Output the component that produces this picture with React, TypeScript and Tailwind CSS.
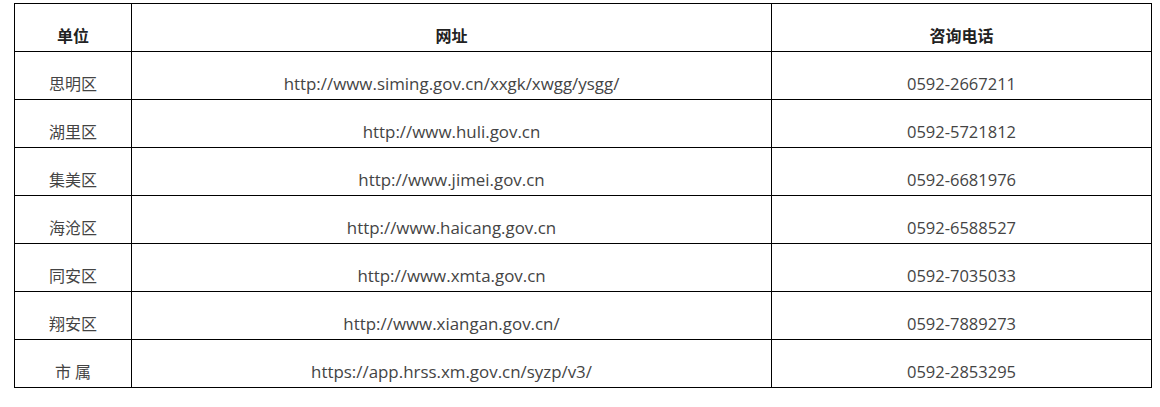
import React from "react";

const rows = [
  { unit: "思明区", url: "http://www.siming.gov.cn/xxgk/xwgg/ysgg/", tel: "0592-2667211" },
  { unit: "湖里区", url: "http://www.huli.gov.cn", tel: "0592-5721812" },
  { unit: "集美区", url: "http://www.jimei.gov.cn", tel: "0592-6681976" },
  { unit: "海沧区", url: "http://www.haicang.gov.cn", tel: "0592-6588527" },
  { unit: "同安区", url: "http://www.xmta.gov.cn", tel: "0592-7035033" },
  { unit: "翔安区", url: "http://www.xiangan.gov.cn/", tel: "0592-7889273" },
  { unit: "市 属", url: "https://app.hrss.xm.gov.cn/syzp/v3/", tel: "0592-2853295" },
];

function App() {
  const cell = "border border-black text-center align-bottom pb-[3px] pt-0 h-[48px]";
  return (
    <div
      className="w-[1160px] h-[407px] bg-white pt-[3px] pl-[14px]"
      style={{ fontFamily: '"Open Sans", "Noto Sans CJK SC", sans-serif' }}
    >
      <table className="border-collapse w-[1138px] text-[16px] leading-[24px] text-[#444]">
        <thead>
          <tr>
            <th className={`${cell} w-[117px] font-bold text-[#222]`}>单位</th>
            <th className={`${cell} w-[640px] font-bold text-[#222]`}>网址</th>
            <th className={`${cell} font-bold text-[#222]`}>咨询电话</th>
          </tr>
        </thead>
        <tbody>
          {rows.map((r) => (
            <tr key={r.unit}>
              <td className={cell}>{r.unit}</td>
              <td className={`${cell} text-[16.9px]`}>{r.url}</td>
              <td className={`${cell} text-[16.5px]`}>{r.tel}</td>
            </tr>
          ))}
        </tbody>
      </table>
    </div>
  );
}

export default App;
